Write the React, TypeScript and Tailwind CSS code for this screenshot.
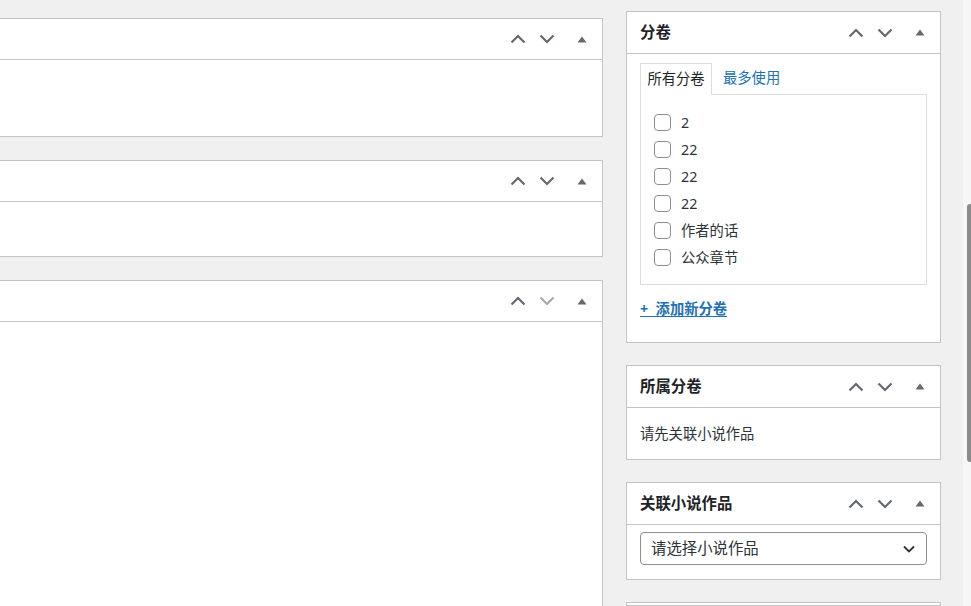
import React from 'react';

const font = "font-['Noto_Sans','Noto_Sans_CJK_SC',sans-serif]";

function ChevronUp({ disabled }: { disabled?: boolean }) {
  return (
    <svg width="16" height="10" viewBox="0 0 16 10" fill="none">
      <polyline points="1.5,8.5 8,2 14.5,8.5" stroke={disabled ? '#a7aaad' : '#646970'} strokeWidth="2.2" />
    </svg>
  );
}

function ChevronDown({ disabled }: { disabled?: boolean }) {
  return (
    <svg width="16" height="10" viewBox="0 0 16 10" fill="none">
      <polyline points="1.5,1.5 8,8 14.5,1.5" stroke={disabled ? '#a7aaad' : '#646970'} strokeWidth="2.2" />
    </svg>
  );
}

function Triangle() {
  return (
    <svg width="10" height="7" viewBox="0 0 10 7">
      <polygon points="0.5,6.5 5,0.5 9.5,6.5" fill="#646970" />
    </svg>
  );
}

function HandleActions({ lowerDisabled }: { lowerDisabled?: boolean }) {
  return (
    <div className="flex h-full items-center">
      <button className="flex h-full w-[29px] items-center justify-center">
        <ChevronUp />
      </button>
      <button className="flex h-full w-[30px] items-center justify-center">
        <ChevronDown disabled={lowerDisabled} />
      </button>
      <button className="flex h-full w-[40px] items-center justify-center">
        <Triangle />
      </button>
    </div>
  );
}

function LeftBox({ bodyClass, lowerDisabled }: { bodyClass: string; lowerDisabled?: boolean }) {
  return (
    <div className="border-y border-r border-[#c3c4c7] bg-white">
      <div className="flex h-[41px] items-center justify-end border-b border-[#c3c4c7]">
        <HandleActions lowerDisabled={lowerDisabled} />
      </div>
      <div className={bodyClass}></div>
    </div>
  );
}

function SideBox({ title, children }: { title: string; children?: React.ReactNode }) {
  return (
    <div className="border border-[#c3c4c7] bg-white">
      <div className="flex h-[42px] items-center justify-between border-b border-[#c3c4c7]">
        <h2 className="pl-[13px] text-[15.4px] font-bold leading-5 text-[#1d2327]">{title}</h2>
        <HandleActions />
      </div>
      {children}
    </div>
  );
}

const volumes = ['2', '22', '22', '22', '作者的话', '公众章节'];

export default function App() {
  return (
    <div className={`flex h-[606px] w-[971px] overflow-hidden bg-[#f0f0f1] ${font}`}>
      <div className="flex w-[963px]">
        {/* main column */}
        <div className="flex w-[603px] shrink-0 flex-col gap-[23px] pt-[18px]">
          <LeftBox bodyClass="h-[76px]" />
          <LeftBox bodyClass="h-[54px]" />
          <LeftBox bodyClass="h-[400px]" lowerDisabled />
        </div>

        {/* sidebar */}
        <div className="ml-[23px] flex w-[315px] shrink-0 flex-col gap-[22px] pt-[11px]">
          <SideBox title="分卷">
            <div className="px-[13px] pb-[23px] pt-[9px]">
              <div className="flex items-end text-[14.3px] leading-5">
                <div className="relative z-10 -mb-px flex h-[32px] w-[72px] items-center justify-center border-x border-t border-[#dcdcde] bg-white pb-[2px] text-[#1d2327]">
                  所有分卷
                </div>
                <div className="ml-[11px] flex h-[31px] items-center pb-[2px] text-[#2271b1]">最多使用</div>
              </div>
              <div className="h-[191px] border border-[#dcdcde] pl-[13px] pt-[14px]">
                {volumes.map((v, i) => (
                  <label key={i} className="flex h-[27px] items-center">
                    <span className="h-[17px] w-[17px] rounded-[4px] border border-[#8c8f94] bg-white"></span>
                    <span className="ml-[10px] text-[14.3px] leading-5 text-[#2c3338]">{v}</span>
                  </label>
                ))}
              </div>
              <a href="#" className="mt-[14px] block text-[14.3px] font-bold leading-5 text-[#2271b1] underline underline-offset-2">
                +&nbsp; 添加新分卷
              </a>
            </div>
          </SideBox>

          <SideBox title="所属分卷">
            <div className="flex h-[51px] items-center pl-[13px] text-[14.3px] leading-5 text-[#2c3338]">
              请先关联小说作品
            </div>
          </SideBox>

          <SideBox title="关联小说作品">
            <div className="px-[13px] pb-[14px] pt-[7px]">
              <div className="flex h-[33px] items-center justify-between rounded-[4px] border border-[#8c8f94] bg-white pl-[10px] pr-[11px] text-[15.4px] leading-5 text-[#2c3338]">
                <span>请选择小说作品</span>
                <svg width="12" height="8" viewBox="0 0 12 8" fill="none">
                  <polyline points="1,1.5 6,6.5 11,1.5" stroke="#2c3338" strokeWidth="1.8" />
                </svg>
              </div>
            </div>
          </SideBox>

          <div className="h-[40px] border border-[#c3c4c7] bg-white"></div>
        </div>
      </div>

      {/* scrollbar strip */}
      <div className="w-[8px] shrink-0 bg-[#f6f6f6] pl-[4px] pt-[204px]">
        <div className="h-[258px] w-[6px] rounded-l-[3px] bg-[#8b8b8b]"></div>
      </div>
    </div>
  );
}
